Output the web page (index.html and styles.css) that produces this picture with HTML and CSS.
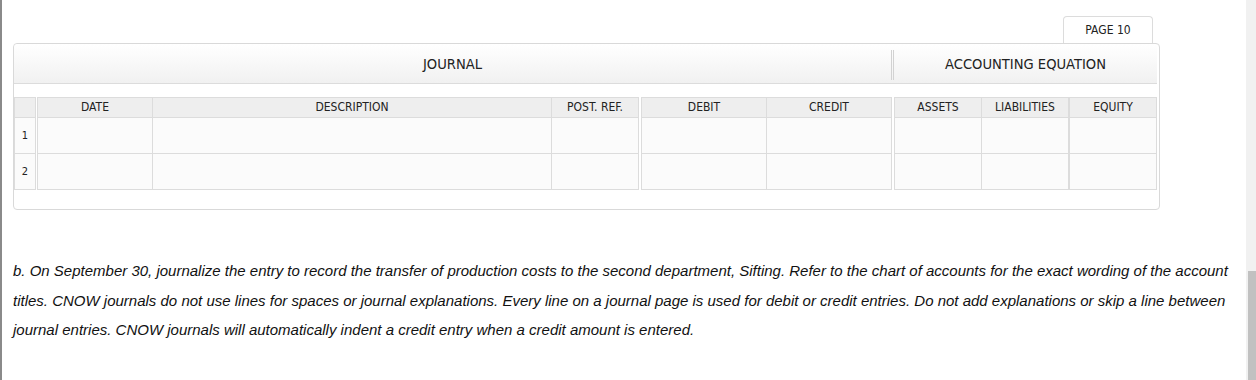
FILE: index.html
```html
<!doctype html>
<html>
<head>
<meta charset="utf-8">
<title>Journal</title>
<link rel="stylesheet" href="styles.css">
</head>
<body>
<div class="frame">
	<div class="content">
		<div class="tabs">
			<div class="tab">PAGE 10</div>
		</div>
		<div class="panel">
			<div class="band">
				<div class="band-journal">JOURNAL</div>
				<div class="band-sep"></div>
				<div class="band-eq">ACCOUNTING EQUATION</div>
			</div>
			<div class="grid">
				<div class="group g-num">
					<div class="th"></div>
					<div class="td num">1</div>
					<div class="td num">2</div>
				</div>
				<div class="group g-main">
					<div class="th">DATE</div>
					<div class="th">DESCRIPTION</div>
					<div class="th">POST. REF.</div>
					<div class="td"></div><div class="td"></div><div class="td"></div>
					<div class="td"></div><div class="td"></div><div class="td"></div>
				</div>
				<div class="group g-amt">
					<div class="th">DEBIT</div>
					<div class="th">CREDIT</div>
					<div class="td"></div><div class="td"></div>
					<div class="td"></div><div class="td"></div>
				</div>
				<div class="group g-al">
					<div class="th">ASSETS</div>
					<div class="th">LIABILITIES</div>
					<div class="td"></div><div class="td"></div>
					<div class="td"></div><div class="td"></div>
				</div>
				<div class="group g-eq">
					<div class="th">EQUITY</div>
					<div class="td"></div>
					<div class="td"></div>
				</div>
			</div>
		</div>
		<p class="note">b. On September 30, journalize the entry to record the transfer of production costs to the second department, Sifting. Refer to the chart of accounts for the exact wording of the account titles. CNOW journals do not use lines for spaces or journal explanations. Every line on a journal page is used for debit or credit entries. Do not add explanations or skip a line between journal entries. CNOW journals will automatically indent a credit entry when a credit amount is entered.</p>
	</div>
	<div class="scrollbar"><div class="thumb"></div></div>
</div>
</body>
</html>
```

FILE: styles.css
```css
*{margin:0; padding:0; box-sizing:border-box;}
body{background:#fff; font-family:"DejaVu Sans", Tahoma, sans-serif; font-stretch:condensed; color:#222;}
.frame{display:flex; height:380px; border-left:2px solid #8a8a8a; overflow:hidden;}
.content{flex:1; padding:0 12px 0 11px;}
.scrollbar{width:10px; background:#f1f1f1; display:flex; justify-content:flex-end;}
.thumb{width:8px; margin-top:271px; background:#c1c1c1;}

.tabs{display:flex; justify-content:flex-end; width:1147px; padding:16px 7px 0 0;}
.tab{width:90px; height:27px; border:1px solid #dcdcdc; border-bottom:none; border-radius:4px 4px 0 0; background:#fff; font-size:12px; text-align:center; line-height:27px;}

.panel{width:1147px; border:1px solid #d9d9d9; border-radius:4px; padding:0 2px 19px 0;}
.band{display:flex; height:40px; border-bottom:1px solid #dcdcdc; background:linear-gradient(#fff, #f1f1f1); font-size:14.6px; border-radius:4px 4px 0 0;}
.band-journal{width:877px; text-align:center; line-height:40px;}
.band-sep{width:3px; margin:6px 0 3px; border-left:1px solid #d2d2d2; border-right:1px solid #d2d2d2;}
.band-eq{flex:1; text-align:center; line-height:40px;}

.grid{display:flex; margin-top:13px;}
.group{display:grid; grid-template-rows:20px 36px 36px; border-top:1px solid #dcdcdc; border-left:1px solid #dcdcdc;}
.g-num{grid-template-columns:21px; margin-right:1px;}
.g-main{grid-template-columns:115px 399px 87px; margin-right:2px;}
.g-amt{grid-template-columns:125px 125px; margin-right:2px;}
.g-al{grid-template-columns:87px 87px;}
.g-eq{grid-template-columns:87px;}
.th, .td{border-right:1px solid #dcdcdc; border-bottom:1px solid #dcdcdc;}
.th{background:#eee; font-size:12px; text-align:center; line-height:19px;}
.td{background:#fbfbfb;}
.num{font-size:11px; text-align:center; line-height:35px;}

.note{margin-top:46px; font-family:"Liberation Sans", Arial, sans-serif; font-stretch:normal; font-style:italic; font-size:15px; line-height:29.5px; color:#111;}
```
